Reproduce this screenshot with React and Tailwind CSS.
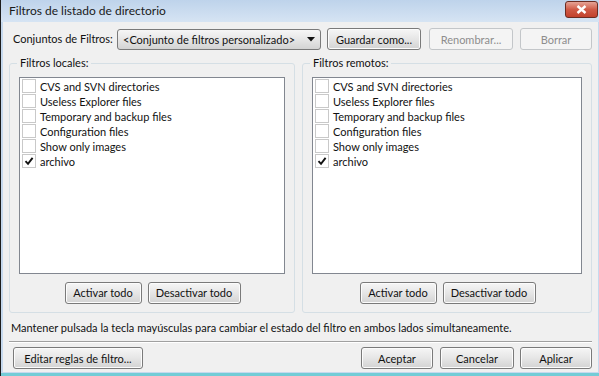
import React from "react";

const filters = [
  { name: "CVS and SVN directories", on: false },
  { name: "Useless Explorer files", on: false },
  { name: "Temporary and backup files", on: false },
  { name: "Configuration files", on: false },
  { name: "Show only images", on: false },
  { name: "archivo", on: true },
];

const Btn = ({ children, className = "", disabled = false }) => (
  <div
    className={
      "h-[22px] flex items-center justify-center rounded-[3px] border text-[11px] leading-none whitespace-nowrap " +
      (disabled
        ? "border-[#c3c6c9] bg-[#f4f4f4] text-[#8d8d8d] "
        : "border-[#7a7a7a] bg-gradient-to-b from-[#f6f6f6] via-[#e6e6e6] to-[#d3d3d3] text-[#111] shadow-[inset_0_0_0_1px_#fcfcfc] ") +
      className
    }
  >
    {children}
  </div>
);

const CheckRow = ({ item }) => (
  <div className="flex items-center h-[15px]">
    <div className="w-[14px] h-[14px] border border-[#c9c9c9] bg-white flex items-center justify-center ml-[2px]">
      {item.on && (
        <svg width="10" height="10" viewBox="0 0 10 10">
          <path d="M1.5 5.2 L4 7.8 L8.6 1.8" stroke="#111" strokeWidth="1.9" fill="none" />
        </svg>
      )}
    </div>
    <span className="ml-[4px] text-[11px] text-[#111] leading-none whitespace-nowrap">{item.name}</span>
  </div>
);

const Group = ({ title, className = "" }) => (
  <fieldset className={"border border-[#d5dfe5] rounded-[3px] px-[9px] pb-[8px] " + className}>
    <legend className="ml-[-2px] px-[3px] text-[11px] text-[#111] whitespace-nowrap">{title}</legend>
    <div className="mt-[5px] h-[197px] border border-[#828790] bg-white pt-[1px]">
      {filters.map((f) => (
        <CheckRow key={f.name} item={f} />
      ))}
    </div>
    <div className="flex justify-center gap-[6px] mt-[8px] pl-[1px]">
      <Btn className="w-[77px]">Activar todo</Btn>
      <Btn className="w-[93px]">Desactivar todo</Btn>
    </div>
  </fieldset>
);

export default function App() {
  return (
    <div
      className="w-[599px] h-[376px] overflow-hidden flex bg-[#dfe3e8]"
      style={{ fontFamily: 'Lato, "Liberation Sans", Arial, sans-serif' }}
    >
      <div className="w-[3px] bg-[#e9e9e9] border-r border-[#1d1d1d]" />
      <div className="flex-1 flex flex-col bg-[#c6d9ee] border-r-[4px] border-b-[3px] border-[#73ccd6]">
        {/* Title bar */}
        <div className="h-[22px] flex items-center justify-between bg-gradient-to-b from-[#bed3eb] to-[#d6e4f3] pl-[8px] pr-[2px]">
          <span className="text-[12px] text-[#1a1a1a] leading-none whitespace-nowrap">Filtros de listado de directorio</span>
          <div className="w-[33px] h-[17px] mt-[-3px] rounded-[3px] border border-[#6b2c22] bg-gradient-to-b from-[#e5a396] via-[#cf5a46] to-[#c2412c] flex items-center justify-center">
            <svg width="11" height="9" viewBox="0 0 11 9">
              <path d="M1.5 1 L9.5 8 M9.5 1 L1.5 8" stroke="white" strokeWidth="2.4" />
            </svg>
          </div>
        </div>

        {/* Client */}
        <div className="flex-1 ml-[2px] mr-[2px] mb-[1px] bg-[#f0f0f0] flex flex-col px-[6px] pt-[6px]">
          <div className="flex items-center">
            <span className="text-[11px] text-[#111] ml-[4px] w-[104px] whitespace-nowrap">Conjuntos de Filtros:</span>
            <div className="w-[204px] h-[21px] rounded-[3px] border border-[#7a7a7a] bg-gradient-to-b from-[#f6f6f6] via-[#e6e6e6] to-[#d3d3d3] flex items-center justify-between pl-[5px] pr-[5px]">
              <span className="text-[11px] text-[#111] leading-none whitespace-nowrap">&lt;Conjunto de filtros personalizado&gt;</span>
              <svg width="8" height="5" viewBox="0 0 8 5">
                <path d="M0 0 H8 L4 4.5 Z" fill="#111" />
              </svg>
            </div>
            <Btn className="ml-[6px] w-[94px]">Guardar como...</Btn>
            <Btn disabled className="ml-[8px] w-[84px]">Renombrar...</Btn>
            <Btn disabled className="ml-[7px] w-[72px]">Borrar</Btn>
          </div>

          <div className="flex gap-[7px] mt-[5px]">
            <Group title="Filtros locales:" className="w-[286px]" />
            <Group title="Filtros remotos:" className="w-[290px]" />
          </div>

          <div className="mt-[7px] ml-[2px] text-[11px] text-[#111] whitespace-nowrap">
            Mantener pulsada la tecla mayúsculas para cambiar el estado del filtro en ambos lados simultaneamente.
          </div>
          <div className="mt-[5px] h-[2px] border-t border-[#a0a0a0] border-b border-b-white" />

          <div className="flex items-center mt-[4px]">
            <Btn className="ml-[4px] w-[130px]">Editar reglas de filtro...</Btn>
            <div className="flex-1" />
            <Btn className="w-[72px]">Aceptar</Btn>
            <Btn className="ml-[7px] w-[74px]">Cancelar</Btn>
            <Btn className="ml-[6px] w-[72px]">Aplicar</Btn>
          </div>
        </div>
      </div>
    </div>
  );
}
